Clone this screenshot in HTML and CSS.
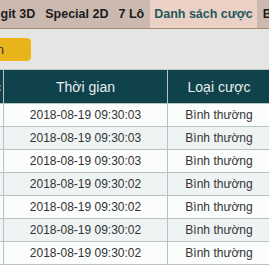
FILE: index.html
```html
<!DOCTYPE html>
<html lang="vi">
<head>
    <meta charset="UTF-8">
    <meta name="viewport" content="width=device-width, initial-scale=1.0">
    <title>Danh sách cược</title>

    <link rel="stylesheet" href="styles.css">
</head>
<body>

    <div class="tabs">
        <div class="tab">Digit 3D</div>
        <div class="tab">Special 2D</div>
        <div class="tab">7 Lô</div>
        <div class="tab active">Danh sách cược</div>
        <div class="tab">Báo cáo</div>
    </div>

    <div class="toolbar">
        <button class="btn">Xác nhận</button>
    </div>

    <table class="bets">
        <colgroup>
            <col class="c-id">
            <col class="c-time">
            <col class="c-type">
        </colgroup>
        <thead>
            <tr>
                <th>Mã cược</th>
                <th>Thời gian</th>
                <th>Loại cược</th>
            </tr>
        </thead>
        <tbody>
            <tr><td>1007</td><td>2018-08-19 09:30:03</td><td>Bình thường</td></tr>
            <tr><td>1006</td><td>2018-08-19 09:30:03</td><td>Bình thường</td></tr>
            <tr><td>1005</td><td>2018-08-19 09:30:03</td><td>Bình thường</td></tr>
            <tr><td>1004</td><td>2018-08-19 09:30:02</td><td>Bình thường</td></tr>
            <tr><td>1003</td><td>2018-08-19 09:30:02</td><td>Bình thường</td></tr>
            <tr><td>1002</td><td>2018-08-19 09:30:02</td><td>Bình thường</td></tr>
            <tr><td>1001</td><td>2018-08-19 09:30:02</td><td>Bình thường</td></tr>
        </tbody>
    </table>

</body>
</html>
```

FILE: styles.css
```css
body {
    margin: 0;
    overflow: hidden;
    font-family: "Liberation Sans", Arial, sans-serif;
    background-color: #fff;
}
.tabs {
    display: flex;
    height: 28px;
    margin-left: -16px;
    background-color: #cbb9b0;
    border-bottom: 1px solid #a38d72;
    white-space: nowrap;
}
.tab {
    padding: 0 4px;
    margin-right: 2px;
    line-height: 28px;
    font-size: 12.5px;
    font-weight: bold;
    color: #1c1c1c;
}
.tab.active {
    background-color: #ebd0c6;
    color: #1d5b5c;
}
.toolbar {
    display: flex;
    height: 40px;
    padding-top: 9px;
    box-sizing: border-box;
    background-color: #e5e6e4;
}
.btn {
    height: 23px;
    margin-left: -78px;
    padding: 0 26px;
    background-color: #e9b31b;
    border: 1px solid #efb615;
    border-radius: 4px;
    font-family: "Liberation Sans", Arial, sans-serif;
    font-size: 13px;
    color: #333;
}
.bets {
    width: 328px;
    margin-left: -58px;
    border-collapse: collapse;
    table-layout: fixed;
    border-top: 1px solid #c3c8c8;
}
.c-id {
    width: 61px;
}
.c-time {
    width: 164px;
}
.c-type {
    width: 103px;
}
.bets th {
    height: 33px;
    padding: 0;
    background-color: #0f424a;
    border: 1px solid #b7c2c2;
    border-top: none;
    font-size: 14px;
    font-weight: normal;
    color: #e9eeee;
}
.bets td {
    height: 22px;
    padding: 0;
    border: 1px solid #b7c2c2;
    text-align: center;
    font-size: 12px;
    color: #333;
    background-color: #fbfcfc;
}
.bets tbody tr:nth-child(even) td {
    background-color: #eef3f3;
}
```
